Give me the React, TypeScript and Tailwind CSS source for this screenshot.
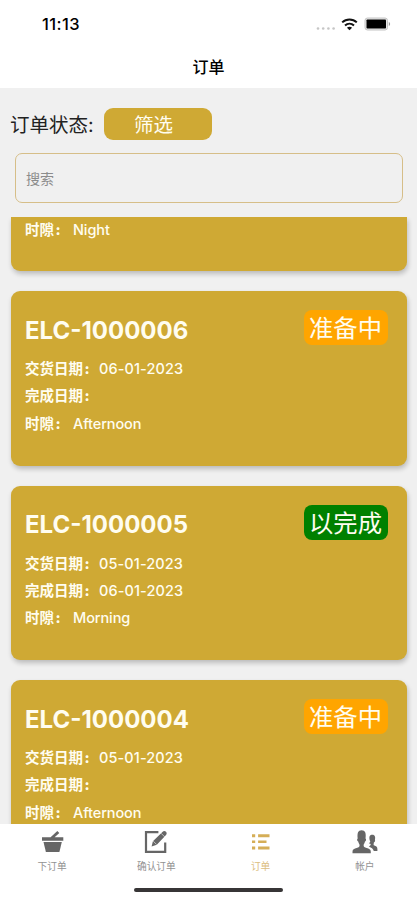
import type { ReactNode } from 'react';

type Order = { id: string; status: string; done?: boolean; delivery: string; completed: string; slot: string };

const orders: Order[] = [
  { id: 'ELC-1000006', status: '准备中', delivery: '06-01-2023', completed: '', slot: 'Afternoon' },
  { id: 'ELC-1000005', status: '以完成', done: true, delivery: '05-01-2023', completed: '06-01-2023', slot: 'Morning' },
  { id: 'ELC-1000004', status: '准备中', delivery: '05-01-2023', completed: '', slot: 'Afternoon' },
];

function Field({ label, value, narrow }: { label: string; value: string; narrow?: boolean }) {
  return (
    <div className="flex h-[27.2px] items-center text-[14.5px] font-medium whitespace-nowrap">
      <span className={`flex shrink-0 font-bold ${narrow ? 'w-[48px]' : 'w-[74px]'}`}>
        {label}
        <span className="pl-[1.5px] font-extrabold">:</span>
      </span>
      <span className={narrow ? 'tracking-[-0.1px]' : 'tracking-[0.1px]'}>{value}</span>
    </div>
  );
}

function OrderCard({ order }: { order: Order }) {
  return (
    <article className="h-[174.5px] shrink-0 rounded-[9px] bg-[#cfa934] pt-[19px] pr-[19px] pl-[14.5px] text-[#fffdf0] shadow-[1px_3px_5px_rgba(0,0,0,0.22)]">
      <div className="flex h-[45.5px] items-start justify-between">
        <h2 className="pt-[2.5px] text-[24px] leading-9 font-bold">{order.id}</h2>
        <span className={`flex h-[35px] w-[84px] items-center justify-center rounded-[8px] pt-[2px] pr-[1px] text-[24.3px] leading-[33px] ${order.done ? 'bg-[#008000]' : 'bg-[#ffa500]'}`}>
          {order.status}
        </span>
      </div>
      <Field label="交货日期" value={order.delivery} />
      <Field label="完成日期" value={order.completed} />
      <Field label="时隙" value={order.slot} narrow />
    </article>
  );
}

function Tab({ label, active, children }: { label: string; active?: boolean; children: ReactNode }) {
  return (
    <div className={`flex flex-1 flex-col items-center pt-[5px] ${active ? 'text-[#d5ae57]' : 'text-[#666666]'}`}>
      <svg width="28" height="28" viewBox="0 0 28 28" fill="currentColor">{children}</svg>
      <span className={`mt-[2px] text-[9.7px] leading-[15px] ${active ? 'text-[#dcbd7d]' : 'text-[#929292]'}`}>{label}</span>
    </div>
  );
}

export default function App() {
  return (
    <div className="flex h-[900px] w-[417px] flex-col overflow-hidden bg-[#f0f0f0] font-[Inter,'Noto_Sans_CJK_SC',sans-serif]">
      <header className="h-[88px] shrink-0 bg-white text-black">
        <div className="flex h-[48px] items-center justify-between pr-[26px] pl-[42px]">
          <span className="text-[16.5px] font-medium tracking-[0.45px]">11:13</span>
          <div className="flex items-center">
            <svg width="20" height="16" viewBox="0 0 20 16" fill="#c6c6c6">
              <circle cx="2" cy="12.5" r="1.3" />
              <circle cx="7.2" cy="12.5" r="1.3" />
              <circle cx="12.4" cy="12.5" r="1.3" />
              <circle cx="17.6" cy="12.5" r="1.3" />
            </svg>
            <svg className="ml-[5px]" width="17" height="13" viewBox="0 0 17 13" fill="none" stroke="#111" strokeWidth="2">
              <path d="M1.2 4.4C5.3.5 11.7.5 15.8 4.4M4 7.5c2.6-2.4 6.4-2.4 9 0" />
              <path d="M8.5 12.3 5.9 9.7c1.5-1.3 3.7-1.3 5.2 0Z" fill="#111" stroke="none" />
            </svg>
            <svg className="ml-[6px]" width="27" height="14" viewBox="0 0 27 14">
              <rect x="1" y="1" width="22.5" height="12" rx="2.5" fill="#e8e8e8" stroke="#c4c4c4" />
              <rect x="2.5" y="2.5" width="19.5" height="9" rx="0.8" fill="#000" />
              <path d="M24.8 5v4c1.8-.6 1.8-3.4 0-4Z" fill="#999" />
            </svg>
          </div>
        </div>
        <h1 className="text-center text-[16px] leading-[38px] font-medium">订单</h1>
      </header>
      <section className="h-[129px] shrink-0">
        <div className="flex items-center pt-[20px] pl-[10px]">
          <span className="w-[94px] pt-[2px] text-[19.5px] leading-[30px] whitespace-nowrap text-[#222]">订单状态:</span>
          <button className="h-[32px] w-[108px] rounded-[9px] bg-[#cfa934] pt-[2px] pr-[9px] text-[19.5px] leading-[30px] text-[#fffdf0]">筛选</button>
        </div>
        <input
          className="mt-[13px] ml-[15px] block h-[50px] w-[388px] rounded-[7px] border border-[#d6be88] bg-transparent px-[10px] text-[14px] outline-none placeholder:text-[#8c8c8c]"
          placeholder="搜索"
        />
      </section>
      <main className="flex min-h-0 flex-1 flex-col gap-[20px] overflow-hidden pr-[10px] pl-[10.5px]">
        <article className="h-[54px] shrink-0 rounded-b-[9px] bg-[#cfa934] pl-[14.5px] text-[#fffdf0] shadow-[1px_3px_5px_rgba(0,0,0,0.22)]">
          <div className="-mt-px">
            <Field label="时隙" value="Night" narrow />
          </div>
        </article>
        {orders.map((order) => (
          <OrderCard key={order.id} order={order} />
        ))}
      </main>
      <nav className="flex h-[76.5px] shrink-0 flex-col justify-between bg-white">
        <div className="flex">
          <Tab label="下订单">
            <path d="M4 8.2h8.6L19.3 2l2 1.9-4.7 4.3h8.7v3.5H4Z" />
            <path d="M5.5 13h18.3l-2.4 10.1H7.9Z" />
          </Tab>
          <Tab label="确认订单">
            <path d="M16.4 3.2H4v19.6h19.2V13.4" fill="none" stroke="currentColor" strokeWidth="2.2" />
            <path d="m9.6 17.6 1.3-5.3L20.7 2.7c.9-.9 2.4-.8 3.3.1.9.9.9 2.4 0 3.3l-9.2 9.6Z" />
            <path d="m11.3 12.2 3.3 3.3M19.1 4.3l3.6 3.6" stroke="#fff" strokeWidth=".6" />
          </Tab>
          <Tab label="订单" active>
            <path d="M5 5.2h3.2v3H5ZM11.1 5.2h11.4v3H11.1ZM5 11.5h3.2V14H5ZM11.1 11.5h8.4V14h-8.4ZM5 17.4h3.2v3H5ZM11.1 17.4h11.4v3H11.1Z" />
          </Tab>
          <Tab label="帐户">
            <path d="M1.5 24.2v-1.5c0-2.5 1.9-2.8 4.1-3.6 2.3-.8 3-1.3 3-3.1 0-.8-1-1.4-1.4-3.5-1.2-.4-1.4-2.7-.5-3C6.1 4.1 7 1.2 10.6 1.2s4.7 2.9 3.9 8.3c.9.3.7 2.6-.5 3-.4 2.1-1.4 2.7-1.4 3.5 0 1.8.8 2.3 3.1 3.1 2.2.8 4.1 1.1 4.1 3.6v1.5Z" />
            <path d="M17.8 14.2c1.7-.5 1.7-1.6 1-2.6-1.1-4.5.2-5.8 2.4-5.8 3.1 0 3.3 2.7 2.7 5.1.7 1-.3 2.1-1 2.5-.3 2-.7 2.4.5 3.2 1.5.8 3 1 3 3.4v1.9h-3.6c-.8-2.1-2.3-3.2-4.8-4.1.8-1 1.7-1.2 1.7-2.2 0-.8-.8-1.2-1.9-1.4Z" />
          </Tab>
        </div>
        <div className="mb-[8px] h-[4px] w-[149px] self-center rounded-full bg-[#373536]" />
      </nav>
    </div>
  );
}
